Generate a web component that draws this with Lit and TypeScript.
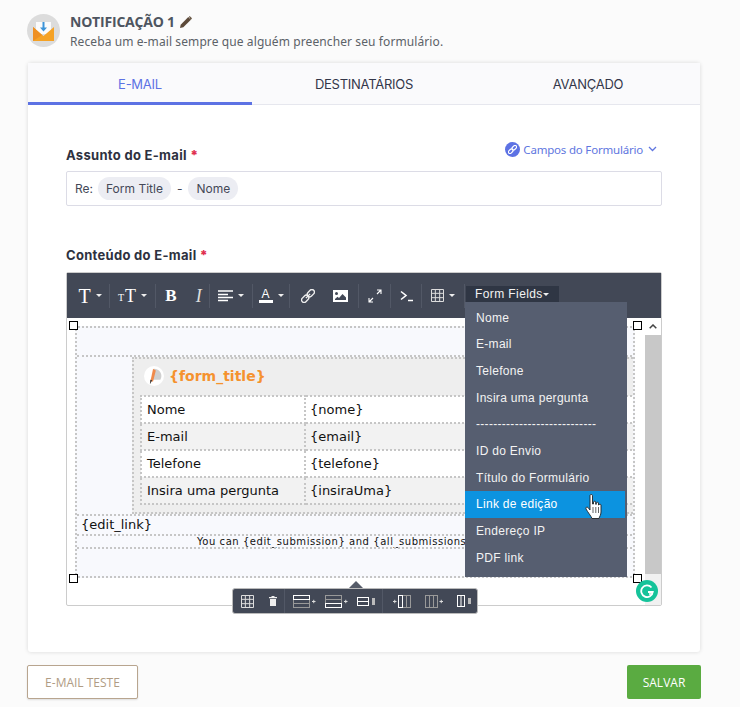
import { LitElement, css, html, svg } from 'lit'
import { customElement } from 'lit/decorators.js'

const FIELDS = ['Nome', 'E-mail', 'Telefone', 'Insira uma pergunta', '----------------------------', 'ID do Envio', 'Título do Formulário', 'Link de edição', 'Endereço IP', 'PDF link']
const ROWS = [['Nome', '{nome}'], ['E-mail', '{email}'], ['Telefone', '{telefone}'], ['Insira uma pergunta', '{insiraUma}']]

const caret = html`<i class="caret"></i>`

const icon = (w: number, h: number, body: unknown) => html`<svg width=${w} height=${h} viewBox="0 0 ${w} ${h}" fill="none">${body}</svg>`

const alignIcon = icon(15, 12, svg`<path d="M0 1h15M0 4.500h10M0 7.500h15M0 10.500h10" stroke="#fff" stroke-width="1.300"/>`)
const linkIcon = icon(14, 14, svg`<g stroke="#eee" stroke-width="1.400" transform="rotate(-45 7 7)"><rect x="-1" y="4.500" width="8" height="5" rx="2.500"/><rect x="7" y="4.500" width="8" height="5" rx="2.500"/><path d="M4 7h6"/></g>`)
const imageIcon = icon(15, 12, svg`<path fill="#fff" fill-rule="evenodd" d="M0 0h15v12H0zM3.500 2a1.500 1.500 0 1 0 0 3 1.500 1.500 0 0 0 0-3zM2 10h11V7.500L9.500 4 6 8 4.500 6.800 2 9z"/>`)
const expandIcon = icon(14, 14, svg`<path d="M1 13 5 9M9 5 13 1M9 1h4v4M1 9v4h4" stroke="#fff" stroke-width="1.100"/>`)
const codeIcon = icon(13, 12, svg`<path d="M1 1.500 6 5.500 1 9.500" stroke="#fff" stroke-width="1.600"/><path d="M8 10.500h5" stroke="#fff" stroke-width="1.500"/>`)
const gridIcon = (s: number, c: string) => icon(s, s, svg`<path stroke=${c} d="M.5.500h${s - 1}v${s - 1}H.500zM${s / 3}.5v${s - 1}M${(2 * s) / 3}.5v${s - 1}M.5 ${s / 3}h${s - 1}M.5 ${(2 * s) / 3}h${s - 1}"/>`)
const trashIcon = icon(8, 10, svg`<path fill="#eee" d="M0 1h2.500V0h3v1H8v1.200H0zM1 3h6v7H1z"/>`)

// rows: three stacked bars, one highlighted
const rowsIcon = (hi: number) => icon(23, 13, svg`
  <rect x=".5" y=".5" width="16" height="12" stroke="#999"/><path d="M.5 4.500h16M.5 8.500h16" stroke="#999"/>
  <rect x=".5" y=${hi === 0 ? 0.5 : 8.5} width="16" height="4" stroke="#fff"/>
  <path d="M19 6.500h3.500M20.750 4.800v3.400" stroke="#ddd"/>`)
const colsIcon = (hi: number, plusLeft: boolean) => icon(18, 13, svg`
  <g transform=${plusLeft ? 'translate(5 0)' : ''}>
    <rect x=".5" y=".5" width="12" height="12" stroke="#999"/><path d="M4.500.5v12M8.500.5v12" stroke="#999"/>
    ${hi >= 0 ? svg`<rect x=${hi === 0 ? 0.5 : 8.5} y=".5" width="4" height="12" stroke="#fff"/>` : ''}
  </g>
  <path d=${plusLeft ? 'M0 6.500h3.500M1.750 4.800v3.400' : 'M14.500 6.500h3.500M16.250 4.800v3.400'} stroke="#ddd"/>`)
const delRowIcon = icon(18, 9, svg`<rect x=".5" y=".5" width="11" height="8" stroke="#fff"/><path d="M.5 4.500h11" stroke="#fff"/><path fill="#bbb" d="M15 1h3v7h-3z"/>`)
const delColIcon = icon(14, 12, svg`<rect x=".5" y=".5" width="7" height="11" stroke="#fff"/><path d="M4 .5v11" stroke="#fff"/><path fill="#bbb" d="M11 3h3v6h-3z"/>`)

@customElement('app-root')
export class AppRoot extends LitElement {
  static styles = css`
    :host {
      display: block;
      width: 740px;
      height: 707px;
      overflow: hidden;
      background: #fbfbfb;
      font-family: "Open Sans", sans-serif;
    }
    .head {
      display: flex;
      gap: 10px;
      padding: 14px 0 0 27px;
      height: 63px;
      box-sizing: border-box;
    }
    .title {
      display: flex;
      align-items: center;
      gap: 5px;
      font-size: 14px;
      font-weight: 700;
      line-height: 15px;
      color: #4e5560;
      letter-spacing: -.2px;
    }
    .sub {
      margin-top: 6px;
      font-family: "Noto Sans", sans-serif;
      font-size: 12px;
      line-height: 14px;
      color: #5c6268;
      letter-spacing: .1px;
      white-space: nowrap;
    }
    .card {
      margin-left: 28px;
      width: 672px;
      height: 589px;
      background: #fff;
      border-radius: 3px;
      box-shadow: 0 0 4px rgba(0, 0, 0, .14);
    }
    .tabs {
      display: grid;
      grid-template-columns: 224px 1fr 224px;
      height: 42px;
      box-sizing: border-box;
      background: #fafafc;
      border-bottom: 1px solid #e6e7ee;
      font-family: Inter, sans-serif;
      font-size: 13px;
      color: #33374a;
      letter-spacing: -.25px;
    }
    .tab {
      display: flex;
      align-items: center;
      justify-content: center;
      height: 42px;
      box-sizing: border-box;
    }
    .tab.on {
      color: #5d72e4;
      border-bottom: 3px solid #5d72e4;
      padding-top: 2px;
    }
    .body {
      padding: 0 38px;
    }
    .label-row {
      display: flex;
      justify-content: space-between;
      height: 66px;
      box-sizing: border-box;
      padding-top: 35px;
    }
    .label {
      font-family: Inter, sans-serif;
      font-size: 13px;
      font-weight: 700;
      color: #2e3140;
      line-height: 30px;
      letter-spacing: .3px;
    }
    .label b {
      color: #e0314f;
    }
    .fields {
      display: flex;
      align-items: center;
      gap: 3px;
      height: 18px;
      margin: 0 5px 0 0;
      font-family: "Noto Sans", sans-serif;
      font-size: 11.500px;
      letter-spacing: -.2px;
      color: #6076e0;
    }
    .fields .dot {
      display: flex;
      align-items: center;
      justify-content: center;
      width: 15px;
      height: 15px;
      border-radius: 50%;
      background: #5d72e4;
    }
    .subject {
      display: flex;
      align-items: center;
      gap: 5px;
      height: 35px;
      box-sizing: border-box;
      padding-left: 8px;
      border: 1px solid #dcdce6;
      border-radius: 2px;
      font-family: Inter, sans-serif;
      font-size: 12px;
      color: #444857;
    }
    .chip {
      padding: 0 8px;
      height: 23px;
      line-height: 23px;
      border-radius: 12px;
      background: #ecedf3;
    }
    .dash {
      margin: 0 1px;
    }
    .label.second {
      margin-top: 34px;
      height: 32px;
    }
    .editor {
      position: relative;
      height: 334px;
      box-sizing: border-box;
      border: 1px solid #ccc;
      border-radius: 2px;
      background: #fff;
    }
    .bar {
      display: grid;
      grid-template-columns: 43px 46px 54px 43px 37px 69px 32px 31px 43px auto;
      align-items: center;
      height: 45px;
      background: #424856;
      color: #fff;
    }
    .cell {
      display: flex;
      align-items: center;
      justify-content: center;
      gap: 5px;
      height: 24px;
      box-sizing: border-box;
      border-right: 1px solid #525866;
      font-family: "Liberation Serif", serif;
      line-height: 1;
    }
    .cell.first {
      padding-left: 4px;
    }
    .cell.spread {
      gap: 19px;
      padding-left: 2px;
    }
    .cell.spread2 {
      gap: 18px;
    }
    .t-big {
      font-size: 20px;
    }
    .t-mid {
      font-size: 18px;
    }
    .t-small {
      font-size: 10px;
      margin-right: -4px;
      padding-top: 5px;
    }
    .t-b {
      font-size: 17px;
      font-weight: 700;
    }
    .t-i {
      font-size: 18px;
      font-style: italic;
      color: #ddd;
    }
    .a-col {
      display: flex;
      flex-direction: column;
      align-items: center;
      font-family: "Liberation Sans", sans-serif;
      font-size: 12px;
      line-height: 12px;
      width: 14px;
      border-bottom: 3px solid #fff;
    }
    .caret {
      display: inline-block;
      width: 0;
      height: 0;
      border: 3px solid transparent;
      border-top-color: #eee;
      border-bottom: 0;
    }
    .ff {
      display: flex;
      align-items: center;
      height: 16px;
      width: 93px;
      margin: 0 0 16px 1px;
      padding-left: 9px;
      box-sizing: border-box;
      align-self: end;
      background: #2f3644;
      font-family: "Liberation Sans", sans-serif;
      font-size: 12px;
      letter-spacing: .4px;
      color: #f2f2f2;
    }
    .content {
      display: flex;
      height: 287px;
    }
    .pane {
      flex: 1;
      padding: 8px 10px 0 8px;
      overflow: hidden;
    }
    .sheet {
      width: 560px;
      height: 252px;
      box-sizing: border-box;
      overflow: hidden;
      background: #f8f9fd;
      border: 2px dotted #c6c6c6;
      font-family: "DejaVu Sans", sans-serif;
      font-size: 13px;
      color: #111;
      display: grid;
      grid-template-rows: 27px 159px 20px 13px 1fr;
    }
    .middle {
      display: flex;
      padding-left: 55px;
      border-top: 2px dotted #c6c6c6;
    }
    .box {
      flex: 1;
      background: #eee;
      border: 2px dotted #c6c6c6;
      border-right: 0;
      white-space: nowrap;
    }
    .form-title {
      display: flex;
      align-items: center;
      gap: 5px;
      height: 34px;
      padding-left: 10px;
      font-size: 14px;
      font-weight: 700;
      color: #f5922e;
    }
    .logo {
      width: 20px;
      height: 20px;
      border-radius: 50%;
      background: #fff;
      flex: none;
    }
    table {
      border-collapse: collapse;
      margin: 2px 0 0 6px;
      width: 500px;
      table-layout: fixed;
      border: 2px dotted #c6c6c6;
    }
    td {
      height: 25px;
      padding: 0 0 0 5px;
      border: 2px dotted #c6c6c6;
      background: #fff;
    }
    td + td {
      padding-left: 4px;
    }
    tr:nth-child(even) td {
      background: #f2f2f2;
    }
    td:first-child {
      width: 157px;
    }
    .edit-row {
      padding-left: 4px;
      line-height: 18px;
      border-top: 2px dotted #c6c6c6;
      white-space: nowrap;
    }
    .note {
      padding-left: 120px;
      font-size: 10px;
      line-height: 12px;
      letter-spacing: .55px;
      border-top: 2px dotted #c6c6c6;
      white-space: nowrap;
    }
    .last {
      border-top: 2px dotted #c6c6c6;
    }
    .scroll {
      display: flex;
      flex-direction: column;
      width: 16px;
      background: #f1f1f1;
    }
    .scroll .up {
      display: flex;
      align-items: center;
      justify-content: center;
      height: 17px;
      background: #fff;
    }
    .scroll .thumb {
      height: 239px;
      background: #c8c8c8;
    }
    .handle {
      position: absolute;
      width: 7px;
      height: 7px;
      background: #fff;
      border: 1px solid #000;
    }
    .menu {
      position: absolute;
      left: 398px;
      top: 29px;
      width: 162px;
      height: 275px;
      box-sizing: border-box;
      padding-top: 2.500px;
      background: #565e70;
      font-family: "Liberation Sans", sans-serif;
      font-size: 12px;
      letter-spacing: .3px;
      color: #f3f3f3;
    }
    .menu div {
      height: 26.700px;
      line-height: 26px;
      padding-left: 11px;
      white-space: nowrap;
      overflow: hidden;
    }
    .menu div.hover {
      background: #0c93e0;
      color: #fff;
      margin-right: 2px;
    }
    .pointer {
      position: absolute;
      left: 518px;
      top: 221px;
    }
    .gly {
      position: absolute;
      left: 569px;
      top: 307px;
      display: flex;
      align-items: center;
      justify-content: center;
      width: 22px;
      height: 22px;
      border-radius: 50%;
      background: #15c39a;
    }
    .pop {
      position: absolute;
      left: 165px;
      top: 315px;
      display: grid;
      grid-template-columns: 52px 98px 1fr;
      align-items: center;
      width: 246px;
      height: 26px;
      box-sizing: border-box;
      background: #424856;
      border: 1px solid #bbb;
      border-radius: 3px;
    }
    .pop::before {
      content: "";
      position: absolute;
      left: 116px;
      top: -8px;
      border: 7px solid transparent;
      border-top: 0;
      border-bottom: 7px solid #555b68;
    }
    .pop-grp {
      display: flex;
      align-items: center;
      gap: 15px;
      height: 24px;
      padding-left: 8px;
      box-sizing: border-box;
      border-right: 1px solid #525866;
    }
    .pop-grp.mid {
      gap: 9px;
    }
    .pop-grp.end {
      gap: 14px;
      padding-left: 10px;
      border-right: 0;
    }
    .foot {
      display: flex;
      justify-content: space-between;
      width: 674px;
      margin: 13px 0 0 27px;
      font-size: 12px;
    }
    .btn {
      display: flex;
      align-items: center;
      justify-content: center;
      height: 34px;
      box-sizing: border-box;
      border-radius: 2px;
    }
    .btn.test {
      width: 111px;
      background: #fff;
      border: 1px solid #b8a58f;
      color: #b09c84;
      box-shadow: 0 1px 2px rgba(0, 0, 0, .12);
    }
    .btn.save {
      width: 74px;
      background: #5aab41;
      color: #fff;
    }
  `

  render() {
    return html`
      <div class="head">
        <svg width="33" height="33" viewBox="0 0 33 33">
          <circle cx="16.500" cy="16.500" r="16.500" fill="#dcdcdc"/>
          <path d="M9 8h15v12H9z" fill="#fbfbfb"/>
          <path d="M16.500 8v8" stroke="#3d94d8" stroke-width="2"/>
          <path d="M13 13.500h7l-3.500 4z" fill="#3d94d8"/>
          <path d="M6 13v14h21V13l-10.500 9z" fill="#f5a225"/>
          <path d="M6 27V13l9 8z" fill="#ee8f22"/>
        </svg>
        <div>
          <div class="title">NOTIFICAÇÃO 1
            <svg width="12" height="12" viewBox="0 0 12 12"><path d="M0 12l.7-3.300 7.600-7.600 2.600 2.600-7.600 7.600z" fill="#5d4a3a"/><path d="M9 .4l.7-.4 2.300 2.300-.4.700-1.100 1z" fill="#6b5a48"/></svg>
          </div>
          <div class="sub">Receba um e-mail sempre que alguém preencher seu formulário.</div>
        </div>
      </div>
      <div class="card">
        <div class="tabs">
          <div class="tab on">E-MAIL</div>
          <div class="tab">DESTINATÁRIOS</div>
          <div class="tab">AVANÇADO</div>
        </div>
        <div class="body">
          <div class="label-row">
            <div class="label">Assunto do E-mail <b>*</b></div>
            <div class="fields">
              <span class="dot">
                <svg width="9" height="9" viewBox="0 0 14 14"><g stroke="#fff" stroke-width="1.800" fill="none" transform="rotate(-45 7 7)"><rect x="-1" y="4.500" width="8" height="5" rx="2.500"/><rect x="7" y="4.500" width="8" height="5" rx="2.500"/></g></svg>
              </span>
              Campos do Formulário
              <svg width="9" height="6" viewBox="0 0 9 6" style="margin-left:2px"><path d="M1 1l3.500 3.500L8 1" stroke="#6076e0" stroke-width="1.300" fill="none"/></svg>
            </div>
          </div>
          <div class="subject">Re: <span class="chip">Form Title</span><span class="dash">-</span><span class="chip">Nome</span></div>
          <div class="label second">Conteúdo do E-mail <b>*</b></div>
          <div class="editor">
            <div class="bar">
              <div class="cell first"><span class="t-big">T</span>${caret}</div>
              <div class="cell"><span class="t-small">T</span><span class="t-mid">T</span>${caret}</div>
              <div class="cell spread"><span class="t-b">B</span><span class="t-i">I</span></div>
              <div class="cell">${alignIcon}${caret}</div>
              <div class="cell"><span class="a-col">A</span>${caret}</div>
              <div class="cell spread2">${linkIcon}${imageIcon}</div>
              <div class="cell">${expandIcon}</div>
              <div class="cell">${codeIcon}</div>
              <div class="cell">${gridIcon(13, '#ddd')}${caret}</div>
              <div class="ff">Form Fields${caret}</div>
            </div>
            <div class="content">
              <div class="pane">
                <div class="sheet">
                  <div></div>
                  <div class="middle">
                    <div class="box">
                      <div class="form-title">
                        <span class="logo">
                          <svg width="20" height="20" viewBox="0 0 22 22">
                            <path d="M11 3a8 8 0 0 1 7 12H8z" fill="#cfcfcf"/>
                            <path d="M7 17 10 3l3 2-3 12z" fill="#f08a4b"/>
                            <path d="M6.500 20 7 15l2 .8z" fill="#333"/>
                          </svg>
                        </span>
                        {form_title}
                      </div>
                      <table>
                        ${ROWS.map(([a, b]) => html`<tr><td>${a}</td><td>${b}</td></tr>`)}
                      </table>
                    </div>
                  </div>
                  <div class="edit-row">{edit_link}</div>
                  <div class="note">You can {edit_submission} and {all_submissions}</div>
                  <div class="last"></div>
                </div>
              </div>
              <div class="scroll">
                <div class="up"><svg width="8" height="5" viewBox="0 0 8 5"><path d="M.7 4.300 4 1l3.300 3.300" stroke="#444" stroke-width="1.500" fill="none"/></svg></div>
                <div class="thumb"></div>
              </div>
            </div>
            <div class="handle" style="left:2px;top:48px"></div>
            <div class="handle" style="left:566px;top:48px"></div>
            <div class="handle" style="left:2px;top:301px"></div>
            <div class="handle" style="left:566px;top:301px"></div>
            <div class="menu">
              ${FIELDS.map(f => html`<div class=${f === 'Link de edição' ? 'hover' : ''}>${f}</div>`)}
            </div>
            <svg class="pointer" width="18" height="26" viewBox="0 0 18 26">
              <path d="M5 1.500c0-1.300 2.500-1.300 2.500 0V10l1 0V8c0-1 2.200-1 2.200 0v2.300h.6V9c0-1 2.200-1 2.200 0v2h.5c0-1 2-1 2 0v7c0 3-1.500 4.500-2 6.500H7c-1-2.500-4-6-6-9.500-.8-1.500 1-2.500 2-1.500l2 2.500z" fill="#fff" stroke="#222" stroke-width=".9"/>
              <path d="M8 13v6M10.800 13v6M13.500 13v6" stroke="#222" stroke-width=".7"/>
            </svg>
            <div class="gly">
              <svg width="14" height="14" viewBox="0 0 14 14" fill="none"><path d="M11.500 3.500A5.800 5.800 0 1 0 12.800 8H8" stroke="#fff" stroke-width="1.800"/><path d="M9 10h3.500" stroke="#fff" stroke-width="1.500"/></svg>
            </div>
            <div class="pop">
              <div class="pop-grp">${gridIcon(13, '#ddd')}${trashIcon}</div>
              <div class="pop-grp mid">${rowsIcon(0)}${rowsIcon(1)}${delRowIcon}</div>
              <div class="pop-grp end">${colsIcon(0, true)}${colsIcon(-1, false)}${delColIcon}</div>
            </div>
          </div>
        </div>
      </div>
      <div class="foot">
        <div class="btn test">E-MAIL TESTE</div>
        <div class="btn save">SALVAR</div>
      </div>
    `
  }
}
